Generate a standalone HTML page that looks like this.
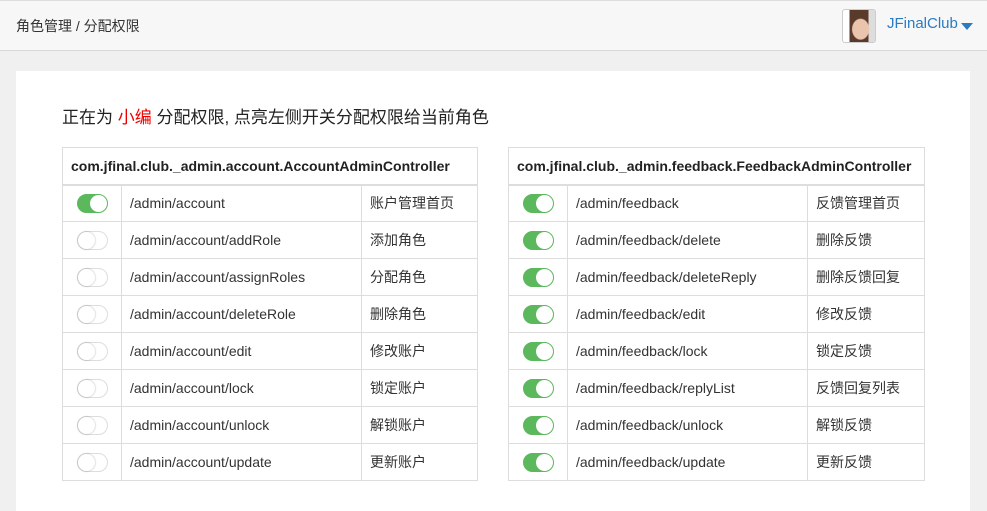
<!DOCTYPE html>
<html><head><meta charset="utf-8"><style>
*{box-sizing:border-box;margin:0;padding:0}
body{width:987px;height:498px;overflow:hidden;background:#f0f0f0;font-family:"Liberation Sans","Noto Sans CJK SC",sans-serif;color:#333;position:relative}
.hd{position:absolute;left:0;top:0;width:987px;height:51px;background:#f7f7f7;border-top:1px solid #ddd;border-bottom:1px solid #d8d8d8}
.crumb{position:absolute;left:16px;top:15px;font-size:14px;color:#333}
.av{position:absolute;left:842px;top:8px;width:34px;height:34px;border:1px solid #ccc;border-radius:3px;background:radial-gradient(ellipse 9px 11px at 55% 60%,#eac4ad 90%,transparent 100%),linear-gradient(90deg,#fff 0 20%,#5a3a2a 20% 80%,#ddd 80%);overflow:hidden}
.user{position:absolute;left:887px;top:14px;font-size:15px;color:#2a7bc2}
.caret{position:absolute;left:961px;top:22px;border-left:6px solid transparent;border-right:6px solid transparent;border-top:7px solid #2a7bc2}
.panel{position:absolute;left:16px;top:71px;width:954px;height:440px;background:#fff}
.title{position:absolute;left:62px;top:103px;font-size:17px;color:#222}
.title b{color:#e00;font-weight:normal}
table{position:absolute;top:147px;border-collapse:collapse;font-size:14px;color:#333}
td,th{border:1px solid #ddd;height:37px;padding:0 8px;text-align:left;white-space:nowrap}
th{font-weight:bold;font-size:14px;color:#222;border-bottom:2px solid #ddd;height:37px}
td.t{width:59px;padding:0;text-align:center}
.tg{display:inline-block;width:31px;height:19px;border-radius:10px;border:1px solid #ddd;background:#fff;position:relative;vertical-align:middle}
.tg:after{content:"";position:absolute;left:0;top:0;width:17px;height:17px;border-radius:50%;background:#fff;box-shadow:0 0 1px 1px rgba(0,0,0,.12)}
.on{background:#5cb85c;border-color:#5cb85c}
.on:after{left:12px;box-shadow:none}
</style></head><body>
<div class="hd"><div class="crumb">角色管理 / 分配权限</div><div class="av"></div><div class="user">JFinalClub</div><div class="caret"></div></div>
<div class="panel"></div>
<div class="title">正在为 <b>小编</b> 分配权限, 点亮左侧开关分配权限给当前角色</div>
<table style="left:62px;width:416px">
<tr><th colspan="3">com.jfinal.club._admin.account.AccountAdminController</th></tr>
<tr><td class="t"><span class="tg on"></span></td><td style="width:240px">/admin/account</td><td>账户管理首页</td></tr>
<tr><td class="t"><span class="tg"></span></td><td>/admin/account/addRole</td><td>添加角色</td></tr>
<tr><td class="t"><span class="tg"></span></td><td>/admin/account/assignRoles</td><td>分配角色</td></tr>
<tr><td class="t"><span class="tg"></span></td><td>/admin/account/deleteRole</td><td>删除角色</td></tr>
<tr><td class="t"><span class="tg"></span></td><td>/admin/account/edit</td><td>修改账户</td></tr>
<tr><td class="t"><span class="tg"></span></td><td>/admin/account/lock</td><td>锁定账户</td></tr>
<tr><td class="t"><span class="tg"></span></td><td>/admin/account/unlock</td><td>解锁账户</td></tr>
<tr><td class="t"><span class="tg"></span></td><td>/admin/account/update</td><td>更新账户</td></tr>
</table>
<table style="left:508px;width:417px">
<tr><th colspan="3">com.jfinal.club._admin.feedback.FeedbackAdminController</th></tr>
<tr><td class="t"><span class="tg on"></span></td><td style="width:240px">/admin/feedback</td><td>反馈管理首页</td></tr>
<tr><td class="t"><span class="tg on"></span></td><td>/admin/feedback/delete</td><td>删除反馈</td></tr>
<tr><td class="t"><span class="tg on"></span></td><td>/admin/feedback/deleteReply</td><td>删除反馈回复</td></tr>
<tr><td class="t"><span class="tg on"></span></td><td>/admin/feedback/edit</td><td>修改反馈</td></tr>
<tr><td class="t"><span class="tg on"></span></td><td>/admin/feedback/lock</td><td>锁定反馈</td></tr>
<tr><td class="t"><span class="tg on"></span></td><td>/admin/feedback/replyList</td><td>反馈回复列表</td></tr>
<tr><td class="t"><span class="tg on"></span></td><td>/admin/feedback/unlock</td><td>解锁反馈</td></tr>
<tr><td class="t"><span class="tg on"></span></td><td>/admin/feedback/update</td><td>更新反馈</td></tr>
</table>
</body></html>
